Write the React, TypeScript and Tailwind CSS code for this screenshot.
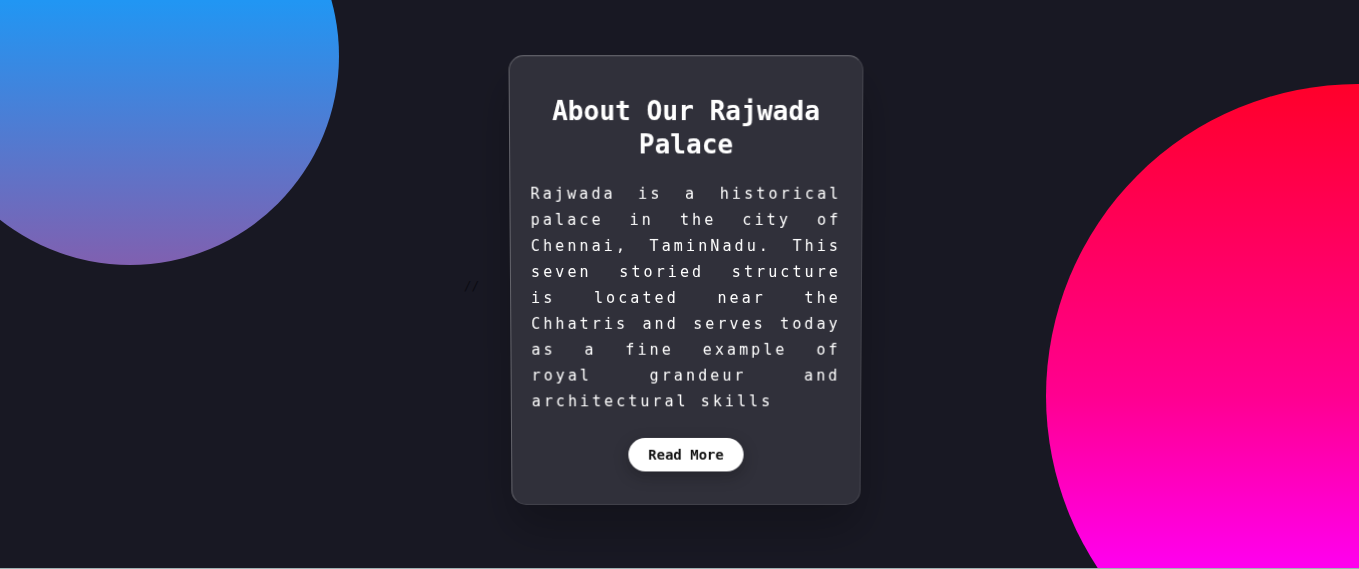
import React from 'react';

const mono = { fontFamily: '"DejaVu Sans Mono", "Liberation Mono", monospace' };

const InfoCard: React.FC = () => {
  return (
    <div className="w-[352px] h-[450px] rounded-[15px] bg-white/10 border border-white/10 border-t-white/30 border-l-white/25 shadow-[0_25px_45px_rgba(0,0,0,0.25)] px-[20px] pt-[38px] [transform:perspective(1000px)_rotateX(-2.2deg)] flex flex-col items-center">
      <h2 className="text-[26px] leading-[33px] font-bold text-white text-center">About Our Rajwada Palace</h2>
      <p className="mt-[19px] text-[15px] leading-[26px] tracking-[3.1px] text-white text-justify">
        Rajwada is a historical palace in the city of Chennai, TaminNadu. This seven storied structure is located near the
        Chhatris and serves today as a fine example of royal grandeur and architectural skills
      </p>
      <button className="mt-[24px] h-[34px] px-[20px] rounded-full bg-white text-[14px] font-bold text-[#111] shadow-[0_5px_15px_rgba(0,0,0,0.25)]">
        Read More
      </button>
    </div>
  );
};

export default function App() {
  return (
    <div className="w-full h-[569px] flex flex-col" style={mono}>
      <main className="relative h-[568px] overflow-hidden bg-[#181823] flex items-center justify-center">
        <div className="absolute left-[-79px] top-[-153px] w-[418px] h-[418px] rounded-full bg-[linear-gradient(to_bottom,#2196f3_37%,#8060b0_100%)]" />
        <div className="absolute left-[1046px] top-[84px] w-[624px] h-[624px] rounded-full bg-[linear-gradient(to_bottom,#ff002a_0%,#ff0090_50%,#ff00f0_78%,#ff00ff_100%)]" />
        <div className="relative flex items-center mt-[-5px] ml-[12px]">
          <span className="text-[13px] text-[#0c0c13] mr-[31px] mt-[8px]">//</span>
          <InfoCard />
          <span className="w-[45px]" />
        </div>
      </main>
      <div className="h-px bg-[#9db3b3]" />
    </div>
  );
}
